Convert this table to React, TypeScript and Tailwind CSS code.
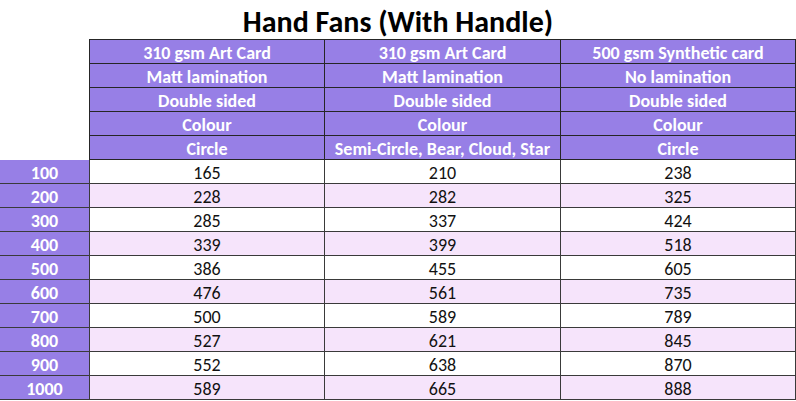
const columns = [
  ["310 gsm Art Card", "Matt lamination", "Double sided", "Colour", "Circle"],
  ["310 gsm Art Card", "Matt lamination", "Double sided", "Colour", "Semi-Circle, Bear, Cloud, Star"],
  ["500 gsm Synthetic card", "No lamination", "Double sided", "Colour", "Circle"],
];

const prices: [string, number, number, number][] = [
  ["100", 165, 210, 238],
  ["200", 228, 282, 325],
  ["300", 285, 337, 424],
  ["400", 339, 399, 518],
  ["500", 386, 455, 605],
  ["600", 476, 561, 735],
  ["700", 500, 589, 789],
  ["800", 527, 621, 845],
  ["900", 552, 638, 870],
  ["1000", 589, 665, 888],
];

const font = { fontFamily: "Carlito, Lato, 'Liberation Sans', sans-serif" };

export default function App() {
  return (
    <div className="w-[796px] h-[401px] overflow-hidden bg-white" style={font}>
      <div className="h-[39px] flex items-center justify-center pt-[4px] text-[30px] font-bold text-black leading-none">
        Hand Fans (With Handle)
      </div>
      <div className="grid grid-cols-[90px_235px_236px_235px] text-[18px] leading-none">
        {[0, 1, 2, 3, 4].map((r) => (
          <div key={r} className="contents">
            <div className="border-r border-[#262626] bg-white" />
            {columns.map((col, c) => (
              <div
                key={c}
                className={`flex items-center justify-center pt-[2px] bg-[#977fe6] text-white font-bold border-r border-b border-[#262626] ${
                  r === 0 ? "h-[25px] border-t" : "h-[24px]"
                }`}
              >
                {col[r]}
              </div>
            ))}
          </div>
        ))}
        {prices.map(([qty, a, b, c], i) => (
          <div key={qty} className="contents">
            <div className="h-[24px] flex items-center justify-center pt-[2px] bg-[#977fe6] text-white font-bold border-r border-b border-[#3a3a3a]">
              {qty}
            </div>
            {[a, b, c].map((v, j) => (
              <div
                key={j}
                className={`h-[24px] flex items-center justify-center pt-[2px] text-[#111] border-r border-b border-[#3a3a3a] ${
                  i % 2 === 0 ? "bg-white" : "bg-[#f6e4fb]"
                }`}
              >
                {v}
              </div>
            ))}
          </div>
        ))}
      </div>
    </div>
  );
}
